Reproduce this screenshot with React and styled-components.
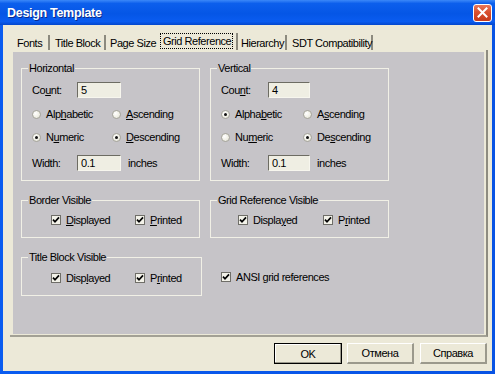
import React from "react";
import styled, { createGlobalStyle } from "styled-components";

const Global = createGlobalStyle`
  html, body {
    margin: 0;
    padding: 0;
    width: 495px;
    height: 374px;
    overflow: hidden;
    background: #ece9d8;
  }
  body {
    font-family: "Liberation Sans", Arial, sans-serif;
    font-size: 11px;
    letter-spacing: -0.45px;
    color: #000;
  }
`;

const Window = styled.div({
  width: 495,
  height: 374,
  display: "flex",
  flexDirection: "column",
  background: "#0853e4",
  boxSizing: "border-box",
});

const TitleBar = styled.div({
  height: 25,
  flex: "0 0 25px",
  display: "flex",
  alignItems: "center",
  justifyContent: "space-between",
  padding: "0 3px 0 7px",
  boxSizing: "border-box",
  background:
    "linear-gradient(to bottom, #3b88f8 0%, #0c5fec 14%, #0556e6 55%, #0a5cf0 86%, #0447cc 100%)",
});

const Title = styled.span({
  color: "#fff",
  fontFamily: '"Liberation Sans", Arial, sans-serif',
  fontWeight: 700,
  fontSize: 12.5,
  letterSpacing: -0.3,
  textShadow: "1px 1px 0 #0b2a8a",
});

const CloseButton = styled.div({
  width: 19,
  height: 18,
  borderRadius: 3,
  border: "1px solid #fff",
  boxSizing: "border-box",
  background: "linear-gradient(to bottom, #e8775a 0%, #d9502f 45%, #c53a1c 100%)",
  display: "flex",
  alignItems: "center",
  justifyContent: "center",
});

const Frame = styled.div({
  flex: 1,
  display: "flex",
  padding: "0 3px 3px 3px",
  background: "linear-gradient(to right, #0a5cf0, #0853e4)",
});

const Client = styled.div({
  flex: 1,
  display: "flex",
  flexDirection: "column",
  background: "#ece9d8",
});

const TabStrip = styled.div({
  marginTop: 5,
  height: 20,
  display: "flex",
  alignItems: "flex-end",
  paddingLeft: 7,
});

const Tab = styled.div(({ $w, $sep, $pad, $active }) => ({
  width: $w,
  height: $active ? 17 : 15,
  boxSizing: "border-box",
  paddingLeft: $active ? 2 : $pad,
  borderRight: $sep ? "2px solid #8c8a7e" : "none",
  display: "flex",
  alignItems: $active ? "flex-start" : "center",
  whiteSpace: "nowrap",
}));

const Focus = styled.span({
  width: 73,
  height: 16,
  boxSizing: "border-box",
  border: "1px dotted #000",
  paddingLeft: 2,
  display: "flex",
  alignItems: "center",
});

const Pane = styled.div({
  marginLeft: 7,
  width: 478,
  height: 287,
  boxSizing: "border-box",
  padding: "2px 2px 1px 3px",
  borderRight: "2px solid #8e8c80",
  borderBottom: "2px solid #a3a195",
  display: "flex",
});

const Sheet = styled.div({
  flex: 1,
  background: "#c6c4c8",
  display: "grid",
  gridTemplateColumns: "179px 179px",
  gridTemplateRows: "113px 38px 39px",
  columnGap: 10,
  rowGap: 19,
  alignContent: "start",
  padding: "16px 0 0 8px",
});

const GroupBox = styled.div(({ $w, $top }) => ({
  position: "relative",
  width: $w || "auto",
  border: "1px solid #f1f0e6",
  boxSizing: "border-box",
  padding: `${$top || 11}px 0 0 10px`,
}));

const Legend = styled.span({
  position: "absolute",
  top: -7,
  left: 6,
  padding: "0 1px",
  lineHeight: "13px",
  background: "#c6c4c8",
  whiteSpace: "nowrap",
});

const Row = styled.div(({ $mt, $pl }) => ({
  display: "flex",
  alignItems: "center",
  height: 20,
  marginTop: $mt || 0,
  paddingLeft: $pl || 0,
  whiteSpace: "nowrap",
}));

const FieldLabel = styled.span(({ $w }) => ({
  width: $w,
  flex: `0 0 ${$w}px`,
}));

const Edit = styled.div(({ $w }) => ({
  width: $w,
  height: 16,
  boxSizing: "border-box",
  background: "#efeee3",
  borderTop: "1px solid #6d6c63",
  borderLeft: "1px solid #6d6c63",
  borderRight: "1px solid #f7f6ee",
  borderBottom: "1px solid #f7f6ee",
  paddingLeft: 3,
  display: "flex",
  alignItems: "center",
  marginRight: 7,
}));

const Choice = styled.label(({ $w }) => ({
  width: $w || "auto",
  flex: $w ? `0 0 ${$w}px` : "0 0 auto",
  display: "flex",
  alignItems: "center",
}));

const RadioDot = styled.span(({ $on }) => ({
  width: 9,
  height: 9,
  borderRadius: "50%",
  border: "1px solid #a6a59b",
  background: "radial-gradient(circle at 35% 35%, #ffffff 0%, #efeee4 60%, #dcdbd0 100%)",
  boxSizing: "border-box",
  marginRight: 5,
  display: "flex",
  alignItems: "center",
  justifyContent: "center",
  "&::after": {
    content: '""',
    width: 3,
    height: 3,
    borderRadius: "50%",
    background: $on ? "#111" : "transparent",
  },
}));

const Box = styled.span({
  width: 10,
  height: 10,
  border: "1px solid #6f6e68",
  background: "#f3f2e9",
  boxSizing: "border-box",
  marginRight: 5,
  display: "flex",
  alignItems: "center",
  justifyContent: "center",
});

const Plain = styled.div({
  display: "flex",
  alignItems: "center",
  paddingLeft: 11,
});

const ButtonRow = styled.div({
  marginTop: 6,
  display: "flex",
  justifyContent: "flex-end",
  paddingRight: 5,
  gap: 6,
});

const Button = styled.div(({ $default, $w }) => ({
  width: $w,
  height: 21,
  boxSizing: "border-box",
  display: "flex",
  alignItems: "center",
  justifyContent: "center",
  background: "#ece9d8",
  borderTop: $default ? "1px solid #000" : "1px solid #fff",
  borderLeft: $default ? "1px solid #000" : "1px solid #fff",
  borderRight: $default ? "1px solid #000" : "2px solid #9b998c",
  borderBottom: $default ? "1px solid #000" : "2px solid #9b998c",
  boxShadow: $default ? "inset -1px -1px 0 #9b998c, inset 1px 1px 0 #fff" : "none",
}));

const Radio = ({ on, w, children }) => (
  <Choice $w={w}>
    <RadioDot $on={on} />
    {children}
  </Choice>
);

const Check = ({ w, children }) => (
  <Choice $w={w}>
    <Box>
      <svg width="8" height="8" viewBox="0 0 8 8">
        <path d="M1 3.6 L3 5.8 L7 1.4" fill="none" stroke="#000" strokeWidth="1.7" />
      </svg>
    </Box>
    {children}
  </Choice>
);

const OrderBox = ({ title, count, labelW, editW, colW, alpha, acc }) => (
  <GroupBox>
    <Legend>{title}</Legend>
    <Row>
      <FieldLabel $w={labelW}>{acc.count}</FieldLabel>
      <Edit $w={editW}>{count}</Edit>
    </Row>
    <Row $mt={4}>
      <Radio w={colW} on={alpha}>{acc.alpha}</Radio>
      <Radio>{acc.asc}</Radio>
    </Row>
    <Row $mt={3}>
      <Radio w={colW} on={!alpha}>{acc.num}</Radio>
      <Radio on>{acc.desc}</Radio>
    </Row>
    <Row $mt={6}>
      <FieldLabel $w={labelW}>Width:</FieldLabel>
      <Edit $w={editW}>0.1</Edit>
      <span>inches</span>
    </Row>
  </GroupBox>
);

const VisibleBox = ({ title, pl, colW, shown, printed, w, top }) => (
  <GroupBox $w={w} $top={top}>
    <Legend>{title}</Legend>
    <Row $pl={pl - 10}>
      <Check w={colW}>{shown}</Check>
      <Check>{printed}</Check>
    </Row>
  </GroupBox>
);

const tabs = [
  { label: "Fonts", w: 40, pad: 7, sep: true },
  { label: "Title Block", w: 56, pad: 5, sep: true },
  { label: "Page Size", w: 52, pad: 4, sep: false },
  { label: "Grid Reference", w: 80, pad: 5, sep: true, active: true },
  { label: "Hierarchy", w: 49, pad: 3, sep: true },
  { label: "SDT Compatibility", w: 86, pad: 5, sep: true },
];

export default function App() {
  return (
    <>
      <Global />
      <Window>
        <TitleBar>
          <Title>Design Template</Title>
          <CloseButton>
            <svg width="11" height="11" viewBox="0 0 11 11">
              <path d="M1.5 1.5 L9.5 9.5 M9.5 1.5 L1.5 9.5" stroke="#fff" strokeWidth="2" strokeLinecap="square" />
            </svg>
          </CloseButton>
        </TitleBar>
        <Frame>
          <Client>
            <TabStrip>
              {tabs.map((t) => (
                <Tab key={t.label} $w={t.w} $sep={t.sep} $pad={t.pad} $active={t.active}>
                  {t.active ? <Focus>{t.label}</Focus> : t.label}
                </Tab>
              ))}
            </TabStrip>
            <Pane>
              <Sheet>
                <OrderBox
                  title="Horizontal"
                  count="5"
                  labelW={45}
                  editW={44}
                  colW={80}
                  alpha={false}
                  acc={{
                    count: <>Co<u>u</u>nt:</>,
                    alpha: <>Alp<u>h</u>abetic</>,
                    asc: <><u>A</u>scending</>,
                    num: <>N<u>u</u>meric</>,
                    desc: <><u>D</u>escending</>,
                  }}
                />
                <OrderBox
                  title="Vertical"
                  count="4"
                  labelW={47}
                  editW={42}
                  colW={82}
                  alpha
                  acc={{
                    count: <>Cou<u>n</u>t:</>,
                    alpha: <>Alpha<u>b</u>etic</>,
                    asc: <>A<u>s</u>cending</>,
                    num: <>Nu<u>m</u>eric</>,
                    desc: <>De<u>s</u>cending</>,
                  }}
                />
                <VisibleBox
                  title="Border Visible"
                  pl={29}
                  colW={84}
                  top={9}
                  shown={<><u>D</u>isplayed</>}
                  printed={<><u>P</u>rinted</>}
                />
                <VisibleBox
                  title="Grid Reference Visible"
                  pl={27}
                  colW={85}
                  top={9}
                  shown={<>Displa<u>y</u>ed</>}
                  printed={<>P<u>r</u>inted</>}
                />
                <VisibleBox
                  title="Title Block Visible"
                  pl={29}
                  colW={84}
                  w={181}
                  top={10}
                  shown={<>Disp<u>l</u>ayed</>}
                  printed={<>P<u>r</u>inted</>}
                />
                <Plain>
                  <Check>
                    <span>ANSI <u>g</u>rid references</span>
                  </Check>
                </Plain>
              </Sheet>
            </Pane>
            <ButtonRow>
              <Button $default $w={68}>OK</Button>
              <Button $w={67} style={{ marginLeft: -1 }}>Отмена</Button>
              <Button $w={67}>Справка</Button>
            </ButtonRow>
          </Client>
        </Frame>
      </Window>
    </>
  );
}
